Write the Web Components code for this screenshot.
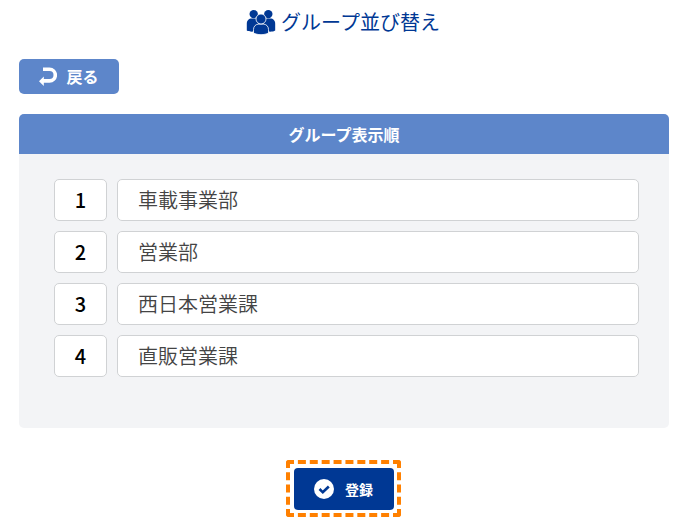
<!DOCTYPE html>
<html lang="ja">
<head>
<meta charset="utf-8">
<meta name="viewport" content="width=device-width, initial-scale=1">
<title>グループ並び替え</title>
<style>
body { margin: 0; background: #fff; color: #000; font-family: "Noto Sans CJK JP", sans-serif; }
</style>
</head>
<body>
<group-sort-page>
  <page-title>グループ並び替え</page-title>
  <back-button>戻る</back-button>
  <order-panel>
    <span slot="heading">グループ表示順</span>
    <order-row number="1">車載事業部</order-row>
    <order-row number="2">営業部</order-row>
    <order-row number="3">西日本営業課</order-row>
    <order-row number="4">直販営業課</order-row>
  </order-panel>
  <submit-button>登録</submit-button>
</group-sort-page>
<script>
const define = (name, html) => customElements.define(name, class extends HTMLElement {
  constructor() {
    super();
    this.attachShadow({ mode: "open" }).innerHTML = html;
  }
  connectedCallback() {
    const number = this.shadowRoot.querySelector(".number");
    if (number) number.textContent = this.getAttribute("number");
  }
});

define("group-sort-page", `
<style>
:host { display: flex; flex-direction: column; padding: 7px 17px 8px 19px; }
</style>
<slot></slot>`);

define("page-title", `
<style>
:host { display: block; padding-right: 2px; color: #003894; }
h1 { display: flex; align-items: center; justify-content: center; gap: 5px; margin: 0; font-size: 20px; line-height: 30px; font-weight: 400; }
svg { width: 30px; height: 26px; }
</style>
<h1>
<svg viewBox="0 0 30 26" fill="currentColor" aria-hidden="true">
  <circle cx="7.700" cy="5.100" r="4.200"/><circle cx="22.300" cy="5.100" r="4.200"/>
  <path d="M.8 21.500v-6.500c0-3.500 2-5.400 5-5.400h5l2 6-5 7c-2.500.2-5.500.1-7-1.100z"/>
  <path d="M29.200 21.500v-6.500c0-3.500-2-5.400-5-5.400h-5l-2 6 5 7c2.500.2 5.500.1 7-1.100z"/>
  <path d="M7.500 24V20.500c0-3.200 2.300-5.400 5.300-5.400h4.400c3 0 5.300 2.200 5.300 5.400v3.500c-4 2.200-11 2.200-15 0z" stroke="#fff" stroke-width=".8"/>
  <circle cx="15" cy="10" r="5" stroke="#fff" stroke-width=".8"/>
</svg>
<slot></slot></h1>`);

define("back-button", `
<style>
:host { display: block; margin-top: 22px; }
button { display: flex; align-items: center; justify-content: center; gap: 9px; width: 100px; height: 35px; padding: 0 0 1px; border: 0; border-radius: 5px; background: #5d86ca; color: #fff; font: 700 16px/24px "Noto Sans CJK JP", sans-serif; cursor: pointer; }
svg { width: 18px; height: 20px; }
</style>
<button type="button">
<svg viewBox="0 0 18 20" aria-hidden="true">
  <path d="M4 3.300h6.500a5.400 5.400 0 0 1 0 11.600H4" fill="none" stroke="#fff" stroke-width="3.600"/>
  <path d="M0 15.200 4.800 10.500v9.500z" fill="#fff"/>
</svg>
<slot></slot></button>`);

define("order-panel", `
<style>
:host { display: block; margin-top: 20px; border-radius: 5px; overflow: hidden; background: #f3f4f6; }
h2 { margin: 0; padding: 8px; background: #5d86ca; color: #fff; font-size: 16px; line-height: 24px; font-weight: 700; text-align: center; }
.rows { display: flex; flex-direction: column; gap: 10px; padding: 25px 30px 51px 35px; }
</style>
<h2><slot name="heading"></slot></h2>
<div class="rows"><slot></slot></div>`);

define("order-row", `
<style>
:host { display: flex; gap: 10px; }
div { box-sizing: border-box; height: 42px; border: 1px solid #d0d2d4; border-radius: 5px; background: #fff; font-size: 20px; line-height: 40px; }
.number { flex: none; width: 53px; text-align: center; font-weight: 500; }
.name { flex: 1; padding: 0 20px; color: #444; font-weight: 350; }
</style>
<div class="number"></div>
<div class="name"><slot></slot></div>`);

define("submit-button", `
<style>
:host { display: flex; justify-content: center; margin-top: 32px; padding-right: 2px; }
.frame { padding: 4px 3px 3px 4px; border: 4px dashed #ff8000; border-radius: 3px; }
button { display: flex; align-items: center; justify-content: center; gap: 11px; width: 100px; height: 42px; padding: 0; border: 0; border-radius: 4px; background: #003894; color: #fff; font: 700 14px/20px "Noto Sans CJK JP", sans-serif; cursor: pointer; }
.check { width: 20px; height: 20px; }
</style>
<div class="frame">
<button type="submit">
<svg class="check" viewBox="0 0 20 20" aria-hidden="true">
  <circle cx="10" cy="10" r="10" fill="#fff"/>
  <path d="m5.500 10 3.300 3.300 6-5.800" fill="none" stroke="#003894" stroke-width="2.600"/>
</svg>
<slot></slot></button>
</div>`);
</script>
</body>
</html>
